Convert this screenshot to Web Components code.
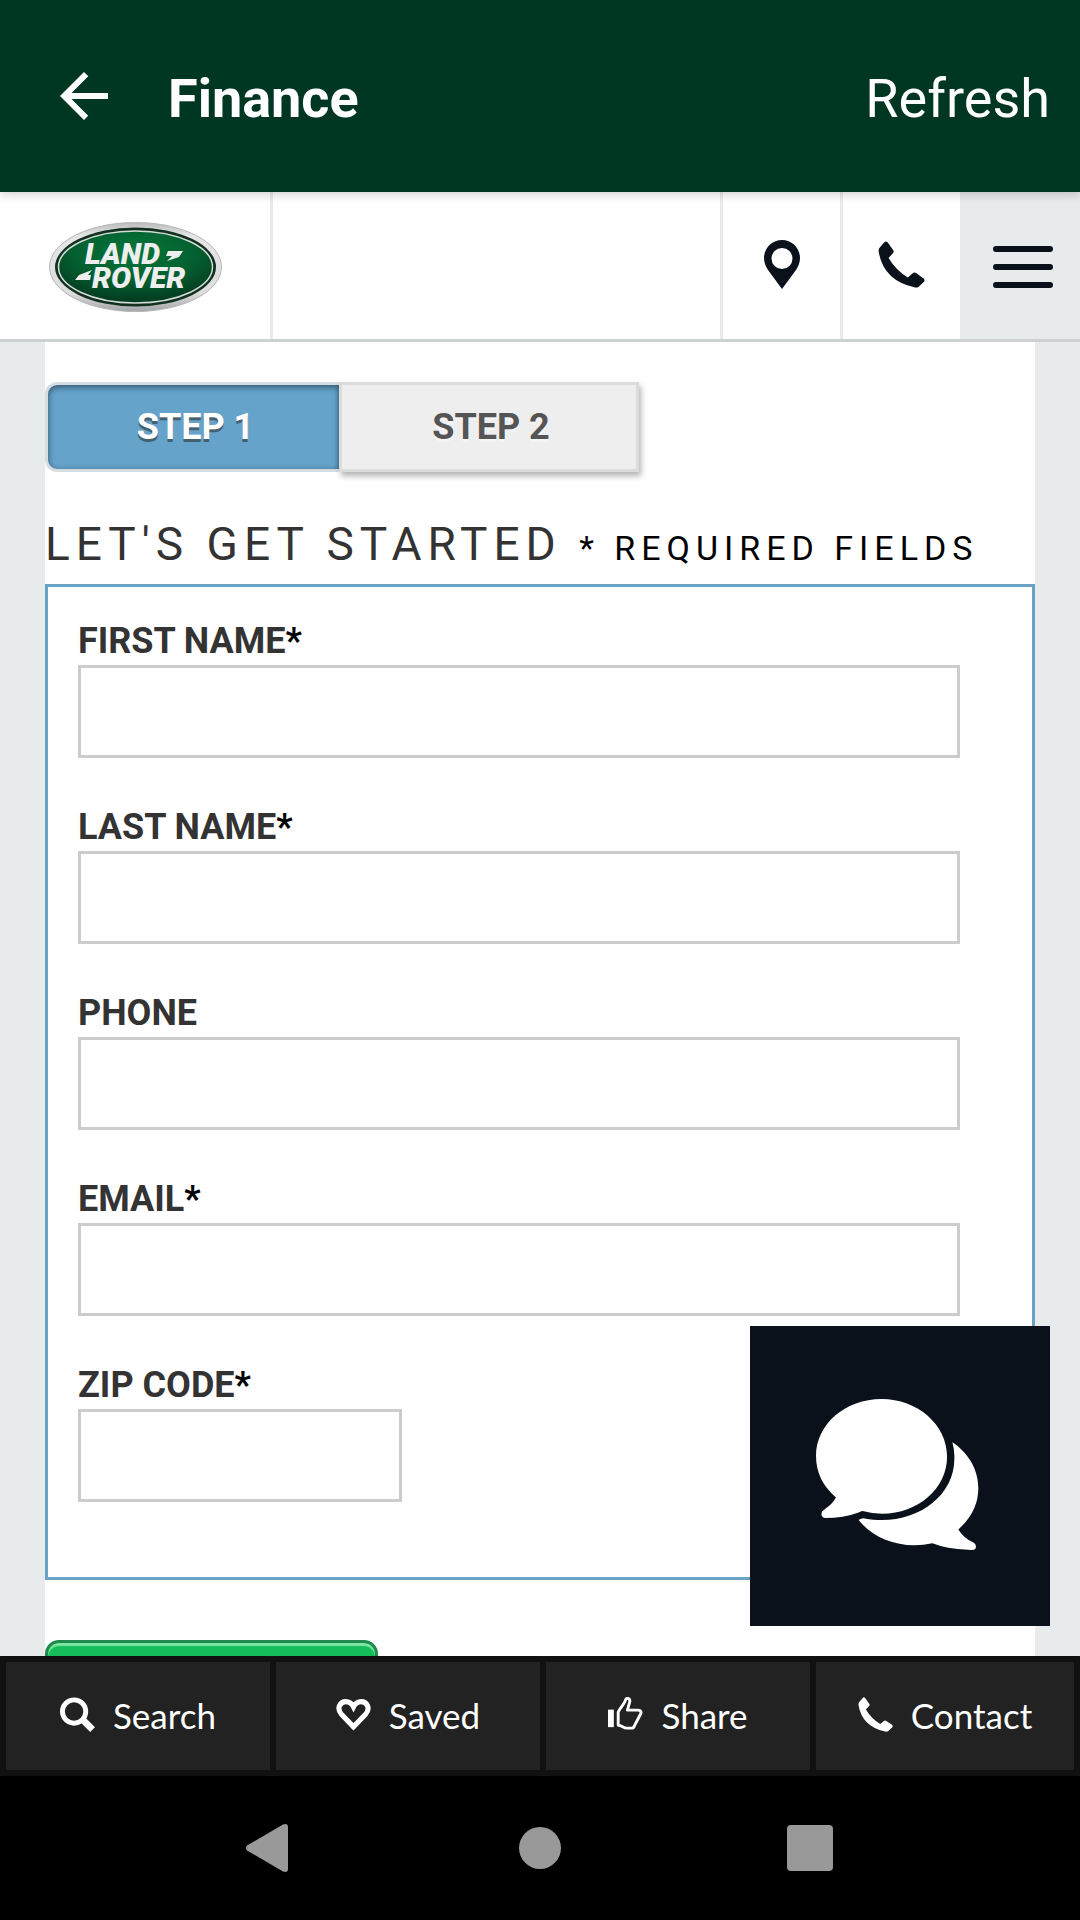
<!DOCTYPE html>
<html lang="en">
<head>
<meta charset="utf-8">
<meta name="viewport" content="width=device-width, initial-scale=1">
<title>Finance</title>
<style>
    html, body {
        margin: 0;
        height: 100%;
    }

    body {
        font-family: Roboto, sans-serif;
        --ink: #0b111b;
        --grey: #e7ebec;
        --blue: #69a2c4;
    }
</style>
</head>
<body>
<finance-app></finance-app>

<script>
const ICONS = {
    back: ['0 0 48 48', '<path d="M48 21H11.500L28.300 4.200 24 0 0 24l24 24 4.200-4.200L11.500 27H48z"/>'],
    pin: ['0 0 36 49', '<path fill-rule="evenodd" d="M18 0C8 0 0 8 0 18c0 5 2 9 4 12l14 19 14-19c2-3 4-7 4-12C36 8 28 0 18 0zm0 8a10.500 10.500 0 1 1 0 21 10.500 10.500 0 0 1 0-21z"/>'],
    phone: ['384 46 142 142', '<path d="M404 49Q409 45 413 50L430 74Q433 79 429 83L416 97Q438 134 474 156L488 144Q493 139 499 143L522 159Q527 164 523 169L507 184Q502 188 494 186Q400 165 386 78Q385 70 390 65Z"/>'],
    menu: ['0 0 60 42', '<path d="M3 3h54M3 21h54M3 39h54" fill="none" stroke="currentColor" stroke-width="6" stroke-linecap="round"/>'],
    search: ['0 0 36 36', '<circle cx="14.500" cy="15" r="12" fill="none" stroke="currentColor" stroke-width="5"/><path d="M23 23l10.500 10.500" stroke="currentColor" stroke-width="7"/>'],
    heart: ['0 0 34 34', '<path d="M17 29L5.500 17C0 11 4 4.500 9.500 4.500c4 0 6 2 7.500 5 1.500-3 3.500-5 7.500-5C30 4.500 34 11 28.500 17z" fill="none" stroke="currentColor" stroke-width="5"/>'],
    like: ['0 0 36 36', '<path d="M0 13h6v18H0z"/><path d="M10.500 16c0-3 7-9 7.500-13 1-2.500 4.500-2 4.500 1.500L20 13.500h11c3 0 3.500 2 2.500 4L27 30c-.5 1.500-1.500 2-3 2h-5c-3 0-5-3-8.500-3z" fill="none" stroke="currentColor" stroke-width="3" stroke-linejoin="round"/>'],
    chat: ['228 266 490 454', '<path d="M425 266C533 266 622 343 622 439S535 611 427 611Q396 611 368 603Q362 604 356 607Q310 624 255 624Q240 620 246 604C258 594 278 582 288 562Q228 512 228 437C228 342 316 266 425 266Z"/><path d="M638 396C687 429 716 478 716 534Q716 604 656 658Q670 682 700 697Q713 703 707 717Q702 721 685 719Q620 717 578 700C490 719 404 690 356 630Q364 624 374 625C510 652 644 570 644 445Q645 420 638 396Z"/>'],
    triangle: ['0 0 48 48', '<path d="M1 21.500L37 .5Q42 -1 42 3v42q0 4-5 2.500L1 26.500Q-1 24 1 21.500z"/>'],
    circle: ['0 0 42 42', '<circle cx="21" cy="21" r="21"/>'],
    square: ['0 0 46 46', '<rect width="46" height="46" rx="4"/>']
};

class UiIcon extends HTMLElement {
    constructor() {
        super();
        this.attachShadow({ mode: "open" });
    }

    connectedCallback() {
        const [box, shapes] = ICONS[this.getAttribute("name")];
        this.shadowRoot.innerHTML = `
        <style>
        :host { display: inline-flex; flex: none; }
        svg { width: 100%; height: 100%; fill: currentColor; }
        </style>
        <svg viewBox="${box}" aria-hidden="true">${shapes}</svg>
        `;
    }
}

class BrandLogo extends HTMLElement {
    constructor() {
        super();
        this.attachShadow({ mode: "open" }).innerHTML = `
        <style>
        :host { display: block; width: 173px; }
        svg { display: block; width: 100%; }
        text { font: italic 900 30px Roboto, sans-serif; }
        </style>
        <svg viewBox="0 0 173 90" role="img" aria-label="Land Rover">
            <defs>
                <linearGradient id="rim" x1="0" y1="0" x2="0" y2="1">
                    <stop offset="0" stop-color="#b9bbbc"/>
                    <stop offset=".15" stop-color="#e6e6e7"/>
                    <stop offset=".8" stop-color="#dcdcdd"/>
                    <stop offset="1" stop-color="#a4a5a6"/>
                </linearGradient>
                <radialGradient id="field" cx=".5" cy=".3" r=".65">
                    <stop offset="0" stop-color="#04773a"/>
                    <stop offset=".6" stop-color="#046030"/>
                    <stop offset="1" stop-color="#033f22"/>
                </radialGradient>
            </defs>
            <ellipse cx="86.500" cy="45" rx="86" ry="44.500" fill="url(#rim)" stroke="#b5b7b8"/>
            <ellipse cx="86.500" cy="45" rx="80.500" ry="39.500" fill="#12301f"/>
            <ellipse cx="86.500" cy="45" rx="77" ry="36" fill="url(#field)" stroke="#d3dcd5" stroke-width="1.500"/>
            <g fill="#eeeeee">
                <text x="36" y="42">LAND</text>
                <text x="43" y="66">ROVER</text>
                <path d="M119 29h15l-4 6-12 4 5-5h-6z"/>
                <path d="M43 48l-4 5h3l-1 5H26l4-5z"/>
            </g>
        </svg>
        `;
    }
}

class AppBar extends HTMLElement {
    constructor() {
        super();
        this.attachShadow({ mode: "open" }).innerHTML = `
        <style>
        :host {
            display: flex;
            align-items: center;
            box-sizing: border-box;
            height: 192px;
            padding: 0 30px 0 60px;
            background: #003723;
            color: #fff;
            box-shadow: 0 2px 10px rgba(0, 0, 0, 0.2);
            z-index: 2;
        }
        button {
            display: flex;
            padding: 0;
            border: 0;
            background: none;
            color: inherit;
            font: 54px/64px Roboto, sans-serif;
        }
        ui-icon { width: 48px; height: 48px; }
        h1 {
            flex: 1;
            margin: 0 0 0 60px;
            font-size: 54px;
            line-height: 64px;
            padding-top: 6px;
        }
        .refresh { padding-top: 6px; }
        </style>
        <button aria-label="Back"><ui-icon name="back"></ui-icon></button>
        <h1><slot></slot></h1>
        <button class="refresh">Refresh</button>
        `;
    }
}

class SiteHeader extends HTMLElement {
    constructor() {
        super();
        this.attachShadow({ mode: "open" }).innerHTML = `
        <style>
        :host {
            display: grid;
            grid-template-columns: 273px 1fr 120px 120px 120px;
            box-sizing: border-box;
            height: 150px;
            background: #fff;
            border-bottom: 3px solid #cdd1d2;
            color: var(--ink);
        }
        a, button {
            display: flex;
            align-items: center;
            justify-content: center;
            padding: 3px 0 0;
            border: 0;
            background: none;
            color: inherit;
        }
        .home {
            justify-content: flex-start;
            padding-left: 49px;
            border-right: 3px solid #e8eaeb;
        }
        .cell { grid-row: 1; border-left: 3px solid #e8eaeb; }
        .map { grid-column: 3; }
        .call { grid-column: 4; }
        .menu { grid-column: 5; padding-left: 6px; background: var(--grey); }
        .map ui-icon { width: 36px; height: 49px; padding-bottom: 6px; }
        .call ui-icon { width: 47px; height: 47px; padding-bottom: 6px; }
        .menu ui-icon { width: 60px; height: 42px; }
        </style>
        <a class="home" href="#home"><brand-logo></brand-logo></a>
        <a class="cell map" href="#directions" aria-label="Directions"><ui-icon name="pin"></ui-icon></a>
        <a class="cell call" href="#call" aria-label="Call"><ui-icon name="phone"></ui-icon></a>
        <button class="menu" aria-label="Menu"><ui-icon name="menu"></ui-icon></button>
        `;
    }
}

class StepTabs extends HTMLElement {
    constructor() {
        super();
        this.attachShadow({ mode: "open" }).innerHTML = `
        <style>
        :host { display: block; }
        div { display: flex; }
        button {
            box-sizing: border-box;
            width: 300px;
            height: 90px;
            padding: 0 0 0 4px;
            border: 3px solid #dcdcdc;
            background: #eee;
            color: #555;
            font: bold 36px/42px Roboto, sans-serif;
            text-shadow: 0 3px 0 #f4f4f4;
            box-shadow: 2px 4px 6px rgba(0, 0, 0, 0.3);
        }
        button[aria-selected="true"] {
            width: 294px;
            border-color: #d5dde2;
            border-right: 0;
            border-radius: 12px 0 0 12px;
            background: #65a3cb;
            color: #fff;
            text-shadow: 0 3px 0 #45606f;
            box-shadow: inset 0 2px 6px rgba(0, 0, 0, 0.5);
        }
        </style>
        <div role="tablist">
            <button role="tab" aria-selected="true">STEP 1</button>
            <button role="tab" aria-selected="false">STEP 2</button>
        </div>
        `;
    }
}

class FormField extends HTMLElement {
    constructor() {
        super();
        this.attachShadow({ mode: "open" });
    }

    connectedCallback() {
        const mark = this.hasAttribute("required") ? "<span>*</span>" : "";
        const type = this.getAttribute("type") ?? "text";
        this.shadowRoot.innerHTML = `
        <style>
        :host { display: flex; flex-direction: column; gap: 3px; }
        label { font-size: 36px; font-weight: bold; line-height: 42px; color: #333; }
        span { color: #000; }
        input {
            box-sizing: border-box;
            width: 100%;
            height: 93px;
            padding: 0 18px;
            border: 3px solid #ccc;
            background: #fff;
            font: 36px Roboto, sans-serif;
        }
        :host([short]) input { width: 324px; }
        </style>
        <label for="box"><slot></slot>${mark}</label>
        <input id="box" type="${type}">
        `;
    }
}

class LeadForm extends HTMLElement {
    constructor() {
        super();
        this.attachShadow({ mode: "open" }).innerHTML = `
        <style>
        :host { display: block; padding-top: 40px; background: #fff; }
        h2 {
            margin: 45px 0 9px;
            font-size: 46px;
            line-height: 54px;
            font-weight: normal;
            letter-spacing: 6px;
            color: #333;
            white-space: nowrap;
        }
        small { font-size: 34px; color: #000; }
        .fields {
            display: flex;
            flex-direction: column;
            gap: 48px;
            padding: 33px 72px 75px 30px;
            border: 3px solid var(--blue);
        }
        .next {
            display: block;
            width: 333px;
            height: 90px;
            margin-top: 60px;
            border: 3px solid #208a4e;
            border-radius: 14px;
            background: #15bd5b;
            box-shadow: inset 0 3px 1px #7de5a0;
        }
        </style>
        <step-tabs></step-tabs>
        <h2>LET'S GET STARTED <small>* REQUIRED FIELDS</small></h2>
        <form>
            <div class="fields">
                <form-field required>FIRST NAME</form-field>
                <form-field required>LAST NAME</form-field>
                <form-field type="tel">PHONE</form-field>
                <form-field type="email" required>EMAIL</form-field>
                <form-field short required>ZIP CODE</form-field>
            </div>
            <button class="next" type="button" aria-label="Next"></button>
        </form>
        `;
    }
}

class ChatButton extends HTMLElement {
    constructor() {
        super();
        this.attachShadow({ mode: "open" }).innerHTML = `
        <style>
        :host { display: block; }
        button {
            display: grid;
            place-items: center;
            width: 300px;
            height: 300px;
            padding: 0 6px 4px 0;
            border: 0;
            background: var(--ink);
            color: #fff;
        }
        ui-icon { width: 163px; height: 151px; }
        </style>
        <button aria-label="Chat"><ui-icon name="chat"></ui-icon></button>
        `;
    }
}

class BottomBar extends HTMLElement {
    constructor() {
        super();
        this.attachShadow({ mode: "open" }).innerHTML = `
        <style>
        :host {
            display: grid;
            grid-template-columns: repeat(4, 1fr);
            box-sizing: border-box;
            height: 120px;
            padding: 6px 0;
            background: #111;
        }
        a {
            display: flex;
            align-items: center;
            justify-content: center;
            gap: 18px;
            padding-bottom: 2px;
            border-left: 6px solid #111;
            background: #222;
            color: #fff;
            font: 35px/42px Lato, sans-serif;
            text-decoration: none;
        }
        a:last-child { border-right: 6px solid #111; }
        ui-icon { width: 35px; height: 35px; padding-bottom: 2px; }
        </style>
        <a href="#search"><ui-icon name="search"></ui-icon>Search</a>
        <a href="#saved"><ui-icon name="heart"></ui-icon>Saved</a>
        <a href="#share"><ui-icon name="like"></ui-icon>Share</a>
        <a href="#contact"><ui-icon name="phone"></ui-icon>Contact</a>
        `;
    }
}

class SystemNav extends HTMLElement {
    constructor() {
        super();
        this.attachShadow({ mode: "open" }).innerHTML = `
        <style>
        :host {
            display: grid;
            grid-template-columns: repeat(3, 1fr);
            box-sizing: border-box;
            height: 144px;
            padding: 0 calc(100% / 8);
            background: #000;
        }
        button {
            display: grid;
            place-items: center;
            padding: 0;
            border: 0;
            background: none;
            color: #999;
        }
        .back { width: 48px; height: 48px; }
        .home { width: 42px; height: 42px; }
        .recent { width: 46px; height: 46px; }
        </style>
        <button aria-label="Back"><ui-icon class="back" name="triangle"></ui-icon></button>
        <button aria-label="Home"><ui-icon class="home" name="circle"></ui-icon></button>
        <button aria-label="Recent apps"><ui-icon class="recent" name="square"></ui-icon></button>
        `;
    }
}

class FinanceApp extends HTMLElement {
    constructor() {
        super();
        this.attachShadow({ mode: "open" }).innerHTML = `
        <style>
        :host { display: flex; flex-direction: column; height: 100vh; }
        app-bar, site-header, bottom-bar, system-nav { flex: none; }
        main {
            position: relative;
            flex: 1;
            min-height: 0;
            overflow: hidden;
            padding: 0 45px;
            background: var(--grey);
        }
        chat-button { position: absolute; right: 30px; bottom: 30px; }
        </style>
        <app-bar>Finance</app-bar>
        <site-header></site-header>
        <main>
            <lead-form></lead-form>
            <chat-button></chat-button>
        </main>
        <bottom-bar></bottom-bar>
        <system-nav></system-nav>
        `;
    }
}

customElements.define('ui-icon', UiIcon);
customElements.define('brand-logo', BrandLogo);
customElements.define('app-bar', AppBar);
customElements.define('site-header', SiteHeader);
customElements.define('step-tabs', StepTabs);
customElements.define('form-field', FormField);
customElements.define('lead-form', LeadForm);
customElements.define('chat-button', ChatButton);
customElements.define('bottom-bar', BottomBar);
customElements.define('system-nav', SystemNav);
customElements.define('finance-app', FinanceApp);
</script>
</body>
</html>
